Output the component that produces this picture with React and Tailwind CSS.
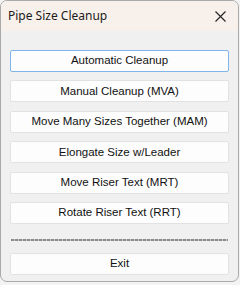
export default function App() {
  const items = [
    "Automatic Cleanup",
    "Manual Cleanup (MVA)",
    "Move Many Sizes Together (MAM)",
    "Elongate Size w/Leader",
    "Move Riser Text (MRT)",
    "Rotate Riser Text (RRT)",
  ];

  return (
    <div className="w-[240px] h-[285px] bg-[#f3f3f3] overflow-hidden">
      <div className="w-[239px] h-[282px] bg-[#f0f0f0] border border-[#a9a9a9] rounded-[7px] overflow-hidden flex flex-col">
        {/* title bar */}
        <div className="h-[30px] bg-[#f8f0eb] flex items-center justify-between pl-[7px] pr-[12px] shrink-0">
          <span
            className="text-[12px] text-[#1b1b1b]"
            style={{ fontFamily: '"Noto Sans", "Open Sans", sans-serif' }}
          >
            Pipe Size Cleanup
          </span>
          <svg width="11" height="11" viewBox="0 0 11 11" className="mt-[1px]">
            <path d="M0.5 0.5 L10.5 10.5 M10.5 0.5 L0.5 10.5" stroke="#222" strokeWidth="1.1" />
          </svg>
        </div>

        {/* body */}
        <div
          className="flex flex-col pt-[19px] px-[9px] text-[11.5px] text-[#111]"
          style={{ fontFamily: '"Liberation Sans", Arial, sans-serif' }}
        >
          <div className="flex flex-col gap-[8.4px]">
            {items.map((label, i) => (
              <button
                key={label}
                className={
                  i === 0
                    ? "h-[22px] w-full bg-[#fdfdfd] border border-[#7fb5e8] rounded-[2px] flex items-center justify-center"
                    : "h-[22px] w-full bg-[#fdfdfd] border border-[#e2e2e2] rounded-[2px] flex items-center justify-center"
                }
              >
                {label}
              </button>
            ))}
          </div>

          {/* separator */}
          <div className="mt-[15px] h-[2px] mx-[1px] bg-[repeating-linear-gradient(90deg,#8c8c8c_0_3px,#c4c4c4_3px_4px)]" />

          <button className="mt-[12px] h-[22px] w-full bg-[#fdfdfd] border border-[#e2e2e2] rounded-[2px] flex items-center justify-center">
            Exit
          </button>
        </div>
      </div>
    </div>
  );
}
